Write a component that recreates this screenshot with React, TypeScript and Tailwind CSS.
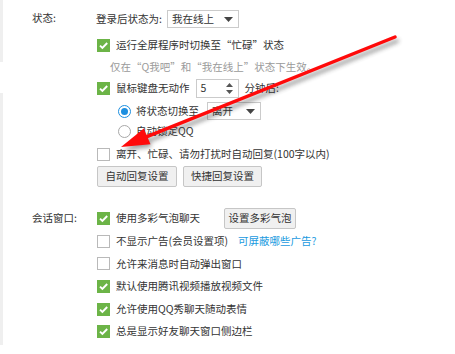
import React from 'react';

const Check = ({ on }: { on?: boolean }) =>
	on ? (
		<span className="flex h-[13px] w-[13px] shrink-0 items-center justify-center bg-[#6cb447]">
			<svg width="11" height="11" viewBox="0 0 11 11">
				<path d="M2 5.6l2.4 2.4L9.2 3" stroke="#fff" strokeWidth="1.9" fill="none" />
			</svg>
		</span>
	) : (
		<span className="h-[13px] w-[13px] shrink-0 border border-[#b9b9b9] bg-white" />
	);

const Radio = ({ on }: { on?: boolean }) => (
	<span
		className={`flex h-[13px] w-[13px] shrink-0 items-center justify-center rounded-full border bg-white ${
			on ? 'border-[#1d8fe0]' : 'border-[#a8a8a8]'
		}`}
	>
		{on && <span className="h-[7px] w-[7px] rounded-full bg-[#1d8fe0]" />}
	</span>
);

const Caret = () => (
	<svg width="9" height="5" viewBox="0 0 9 5">
		<path d="M0 0h9L4.5 5z" fill="#444" />
	</svg>
);

const Select = ({ value, className }: { value: string; className: string }) => (
	<div className={`flex items-center justify-between border border-[#cbcbcb] bg-white pl-[4px] pr-[5px] ${className}`}>
		<span>{value}</span>
		<Caret />
	</div>
);

const Button = ({ children, className }: { children: React.ReactNode; className: string }) => (
	<div
		className={`flex items-center justify-center whitespace-nowrap rounded-[2px] border border-[#c6c6c6] bg-[#f0f0f0] text-[#333] ${className}`}
	>
		{children}
	</div>
);

const Row = ({ children, className = '' }: { children: React.ReactNode; className?: string }) => (
	<div className={`flex items-center whitespace-nowrap ${className}`}>{children}</div>
);

const App = () => {
	return (
		<div
			className="relative flex h-[354px] w-[455px] overflow-hidden bg-white text-[10.5px] leading-none text-[#333]"
			style={{ fontFamily: '"Noto Sans CJK SC", "Noto Sans", sans-serif' }}
		>
			{/* left panel edge */}
			<div className="flex w-[3px] flex-col">
				<div className="h-[62px] bg-[#efefef]" />
				<div className="h-[31px]" />
				<div className="h-[252px] bg-[#efefef]" />
			</div>

			<div className="flex flex-1 flex-col">
				{/* 状态 */}
				<div className="flex pt-[9px]">
					<div className="w-[93px] pl-[29px] pt-[4px]">状态:</div>
					<div className="flex flex-col">
						<Row className="h-[20px] gap-[5px]">
							<span>登录后状态为:</span>
							<Select value="我在线上" className="h-[18px] w-[72px]" />
						</Row>
						<Row className="mt-[6px] h-[20px] gap-[6px] pl-[1px]">
							<Check on />
							<span>运行全屏程序时切换至“忙碌”状态</span>
						</Row>
						<Row className="mt-[2px] h-[20px] pl-[14px] text-[#9a9a9a]">
							仅在“Q我吧”和“我在线上”状态下生效。
						</Row>
						<Row className="mt-[1px] h-[21px] gap-[6px] pl-[1px]">
							<Check on />
							<span>鼠标键盘无动作</span>
							<div className="flex h-[19px] w-[43px] items-center justify-between border border-[#cbcbcb] bg-white pl-[4px] pr-[5px]">
								<span>5</span>
								<svg width="7" height="11" viewBox="0 0 7 11">
									<path d="M0 4h7L3.5 0zM0 7h7L3.5 11z" fill="#555" />
								</svg>
							</div>
							<span>分钟后:</span>
						</Row>
						<Row className="mt-[2px] h-[20px] gap-[5px] pl-[22px]">
							<Radio on />
							<span>将状态切换至</span>
							<Select value="离开" className="ml-[3px] h-[18px] w-[54px]" />
						</Row>
						<Row className="h-[20px] gap-[5px] pl-[22px]">
							<Radio />
							<span>自动锁定QQ</span>
						</Row>
						<Row className="mt-[3px] h-[20px] gap-[6px] pl-[1px]">
							<Check />
							<span>离开、忙碌、请勿打扰时自动回复(100字以内)</span>
						</Row>
						<Row className="mt-[2px] h-[21px] gap-[6px] pl-[1px]">
							<Button className="h-[21px] w-[80px]">自动回复设置</Button>
							<Button className="h-[21px] w-[79px]">快捷回复设置</Button>
						</Row>
					</div>
				</div>

				{/* 会话窗口 */}
				<div className="mt-[20px] flex">
					<div className="w-[93px] pl-[29px] pt-[6px]">会话窗口:</div>
					<div className="flex flex-col">
						<Row className="h-[23px] gap-[6px] pl-[1px]">
							<Check on />
							<span>使用多彩气泡聊天</span>
							<Button className="ml-[18px] h-[21px] w-[72px]">设置多彩气泡</Button>
						</Row>
						<Row className="h-[22.6px] gap-[6px] pl-[1px]">
							<Check />
							<span>不显示广告(会员设置项)</span>
							<span className="ml-[4px] text-[#1a9ae0]">可屏蔽哪些广告?</span>
						</Row>
						<Row className="h-[22.6px] gap-[6px] pl-[1px]">
							<Check />
							<span>允许来消息时自动弹出窗口</span>
						</Row>
						<Row className="h-[22.6px] gap-[6px] pl-[1px]">
							<Check on />
							<span>默认使用腾讯视频播放视频文件</span>
						</Row>
						<Row className="h-[22.6px] gap-[6px] pl-[1px]">
							<Check on />
							<span>允许使用QQ秀聊天随动表情</span>
						</Row>
						<Row className="h-[22.6px] gap-[6px] pl-[1px]">
							<Check on />
							<span>总是显示好友聊天窗口侧边栏</span>
						</Row>
					</div>
				</div>
			</div>

			{/* red annotation arrow */}
			<svg className="pointer-events-none absolute inset-0" width="455" height="354" viewBox="0 0 455 354">
				<defs>
					<filter id="sh" x="-10%" y="-10%" width="120%" height="130%">
						<feGaussianBlur stdDeviation="2" />
					</filter>
				</defs>
				<g transform="translate(2 4)" filter="url(#sh)" opacity="0.45">
					<line x1="395" y1="37" x2="147" y2="136.6" stroke="#333" strokeWidth="4" strokeLinecap="round" />
					<polygon points="121,147 149.6,143.1 144.4,130.1" fill="#333" />
				</g>
				<line x1="395" y1="37" x2="147" y2="136.6" stroke="#ff0a0a" strokeWidth="3.5" strokeLinecap="round" />
				<polygon points="121,147 150.5,144.2 143.8,128.6" fill="#ff0a0a" />
			</svg>
		</div>
	);
};

export default App;
